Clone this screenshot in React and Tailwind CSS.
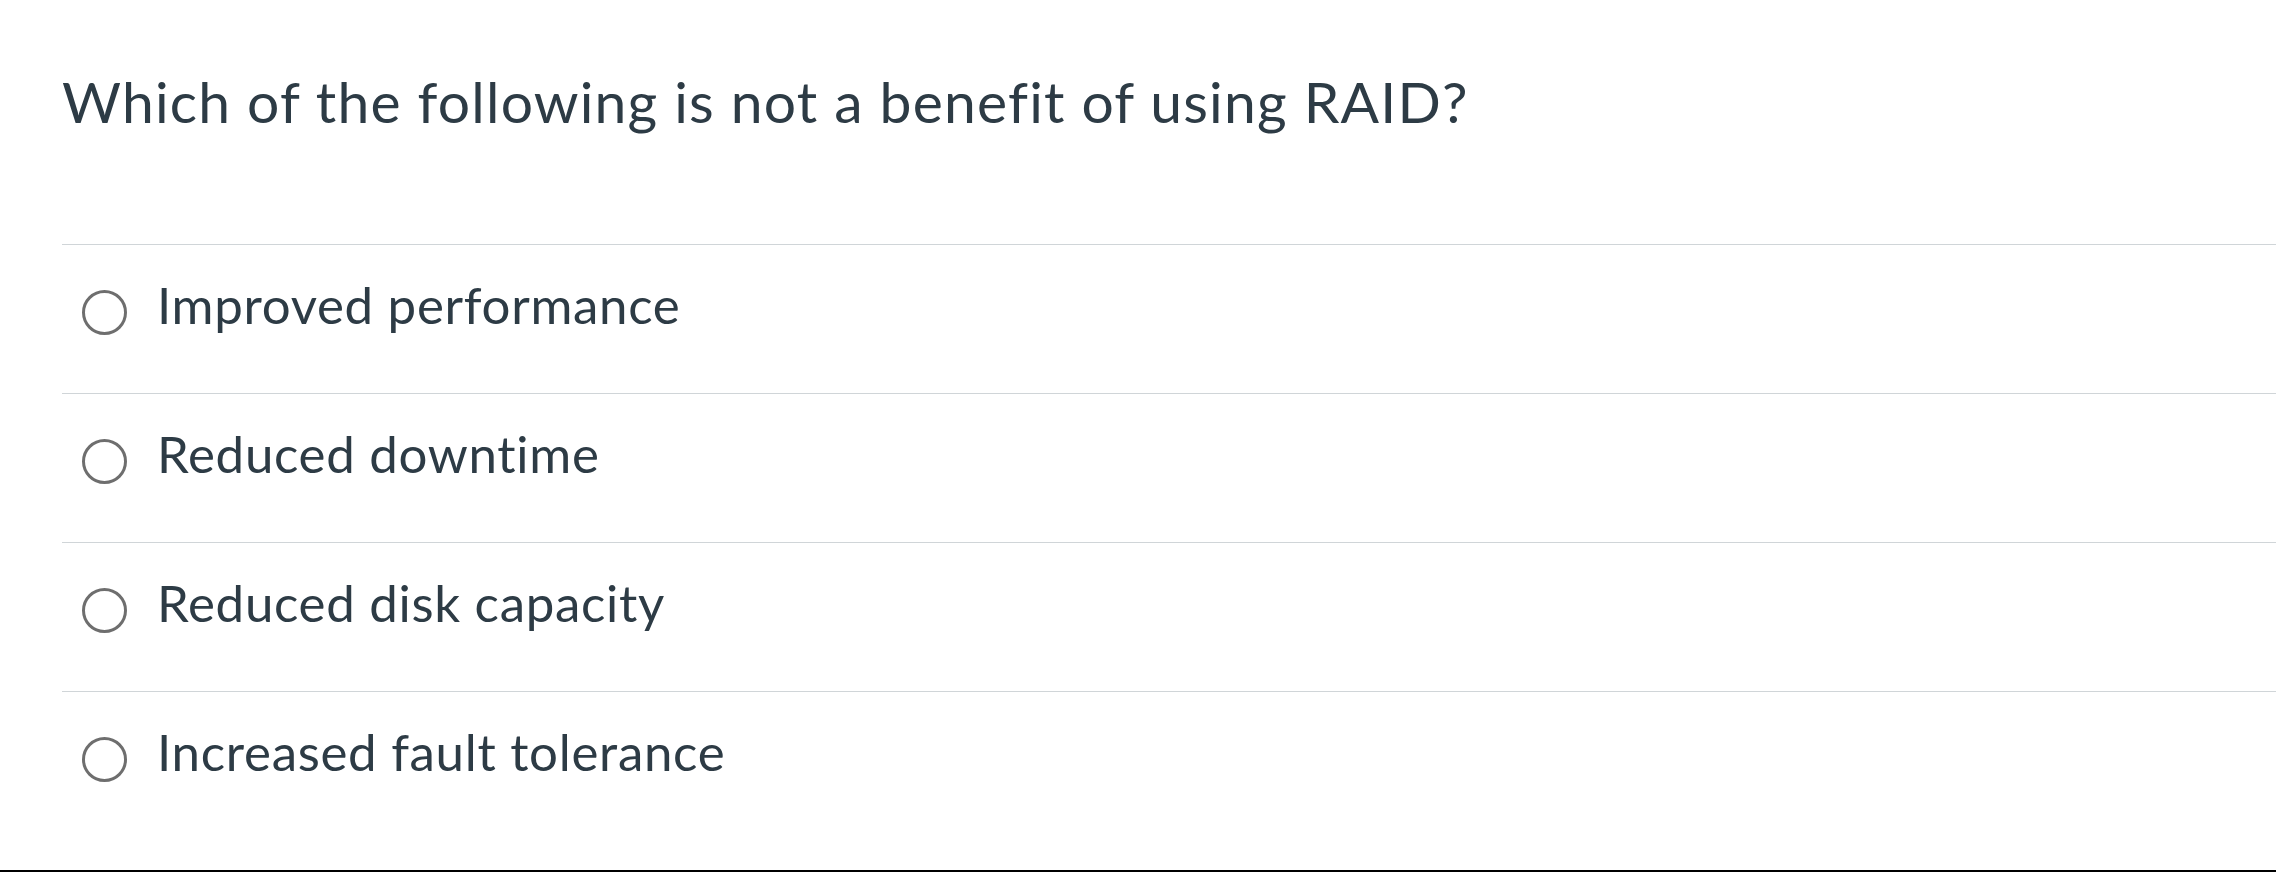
import React from "react";

const answers = [
  "Improved performance",
  "Reduced downtime",
  "Reduced disk capacity",
  "Increased fault tolerance",
];

export default function App() {
  return (
    <div className="h-[872px] w-full bg-white flex flex-col overflow-hidden font-['Lato','Liberation_Sans',sans-serif] text-[#2d3b45]">
      <div className="flex-1 pl-[62px]">
        {/* question */}
        <div className="pt-[67px] pb-[109px]">
          <p className="text-[57px] leading-[68px] tracking-[1.2px]">
            Which of the following is not a benefit of using RAID?
          </p>
        </div>

        {/* answers */}
        <div>
          {answers.map((label) => (
            <label
              key={label}
              className="flex items-start border-t-[1.5px] border-[#d0d5d8] pt-[29px] pb-[58px]"
            >
              <span className="ml-[20px] mt-[16px] w-[45px] h-[45px] rounded-full border-[3px] border-[#6e6e6e] bg-white flex-shrink-0" />
              <span className="ml-[30px] text-[51px] leading-[61px] tracking-[0.7px]">{label}</span>
            </label>
          ))}
        </div>
      </div>
      <div className="h-[2px] bg-black" />
    </div>
  );
}
